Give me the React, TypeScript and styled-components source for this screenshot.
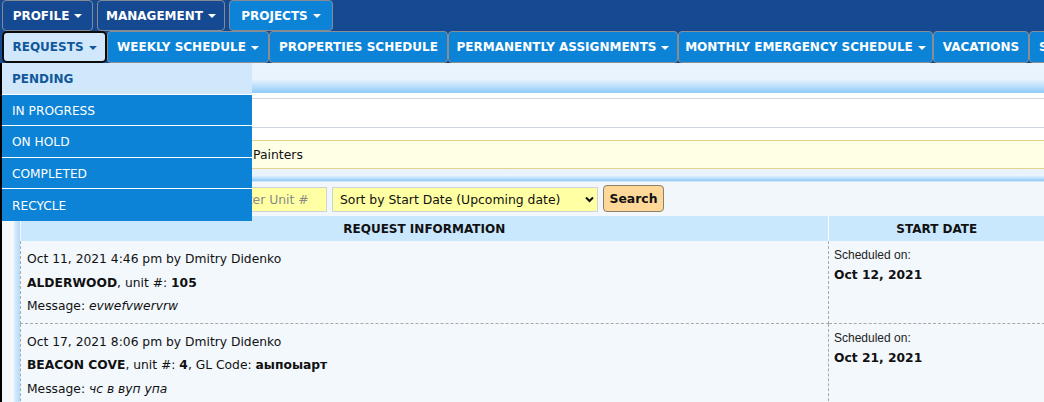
import React from "react";
import styled, { createGlobalStyle, css } from "styled-components";

const GlobalStyle = createGlobalStyle`
  html, body { margin: 0; padding: 0; background: #f3f8fd; overflow: hidden; }
  body {
    font-family: "DejaVu Sans", Verdana, sans-serif;
    font-size: 12.3px;
    color: #111;
  }
  * { box-sizing: border-box; }
`;

const Page = styled.div`
  width: 1044px;
  min-height: 402px;
  overflow: hidden;
`;

const Header = styled.header`
  background: #154a92;
`;

const TopRow = styled.nav`
  display: flex;
  gap: 4px;
  padding-left: 2px;
  height: 31px;
`;

const TopTab = styled.div<{ $w: number; $bright?: boolean }>`
  width: ${(p) => p.$w}px;
  height: 31px;
  display: flex;
  align-items: center;
  justify-content: center;
  gap: 5px;
  border: 1px solid #858b94;
  border-radius: 4px;
  background: ${(p) => (p.$bright ? "#0c83d6" : "#154a92")};
  color: #fff;
  font-weight: bold;
  font-size: 12px;
  white-space: nowrap;
`;

const SubRow = styled.nav`
  display: flex;
  padding-left: 2px;
  height: 32px;
  white-space: nowrap;
`;

const SubTabWrap = styled.div`
  position: relative;
`;

const SubTab = styled.div<{ $w?: number; $active?: boolean }>`
  ${(p) => (p.$w ? css`width: ${p.$w}px;` : css`padding: 0 9px;`)}
  flex-shrink: 0;
  height: 32px;
  display: flex;
  align-items: center;
  justify-content: center;
  gap: 5px;
  border: 1px solid #8a8d92;
  border-radius: 4px;
  background: #0c83d6;
  color: #fff;
  font-weight: bold;
  font-size: 12px;
  ${(p) =>
    p.$active &&
    css`
      border: 2px solid #0b0b0b;
      border-radius: 5px;
      background: #d1e8fc;
      color: #11589b;
    `}
`;

const Caret = styled.span<{ $dark?: boolean }>`
  display: inline-block;
  width: 0;
  height: 0;
  border-left: 4px solid transparent;
  border-right: 4px solid transparent;
  border-top: 4px solid ${(p) => (p.$dark ? "#11589b" : "#fff")};
  margin-top: 1px;
`;

const Menu = styled.ul`
  position: absolute;
  top: 100%;
  left: 0;
  width: 250px;
  margin: 0;
  padding: 0;
  list-style: none;
  z-index: 10;
`;

const MenuItem = styled.li<{ $active?: boolean }>`
  height: 31.5px;
  display: flex;
  align-items: center;
  padding: 2px 0 0 10px;
  border-bottom: 1px solid #fff;
  background: ${(p) => (p.$active ? "#d1e8fc" : "#0c83d6")};
  color: ${(p) => (p.$active ? "#11589b" : "#fff")};
  font-weight: ${(p) => (p.$active ? "bold" : "normal")};
  font-size: ${(p) => (p.$active ? "12px" : "12.2px")};
  &:last-child { border-bottom: none; height: 31.5px; }
`;

const Content = styled.main`
  border-left: 2px solid #000;
`;

const GlowBand = styled.div<{ $h: number }>`
  height: ${(p) => p.$h}px;
  background: linear-gradient(to bottom, #eaf4fe 0%, #e8f3fe 55%, #8ecaf8 100%);
`;

const WhiteBox = styled.section`
  background: #fff;
  padding: 5px 0 12px;
`;

const TitleStrip = styled.div`
  height: 30px;
  border-top: 1px solid #cfd6de;
  border-bottom: 1px solid #cfd6de;
`;

const InfoBand = styled.div`
  height: 29px;
  display: flex;
  align-items: center;
  padding-left: 251px;
  background: #ffffe6;
  border-top: 1px solid #e6d28c;
  border-bottom: 1px solid #e6d28c;
  font-size: 12.4px;
`;

const FilterRow = styled.form`
  height: 35px;
  display: flex;
  align-items: center;
  gap: 5px;
  padding-left: 12px;
  background: #f2f7fc;
  border-top: 1px solid #d3e6f7;
`;

const fieldStyle = css`
  height: 25px;
  border: 1px solid #cdd3d8;
  background: #ffffa3;
  font-family: "DejaVu Sans", Verdana, sans-serif;
  font-size: 12.4px;
  color: #111;
  outline: none;
`;

const TextField = styled.input<{ $w: number }>`
  ${fieldStyle}
  width: ${(p) => p.$w}px;
  padding: 0 5px;
  &::placeholder { color: #8a8a8a; }
`;

const SelectWrap = styled.span`
  position: relative;
  display: inline-flex;
`;

const Select = styled.select<{ $w: number }>`
  ${fieldStyle}
  width: ${(p) => p.$w}px;
  appearance: none;
  padding: 0 18px 0 7px;
`;

const Chevron = styled.svg`
  position: absolute;
  right: 4px;
  top: 9px;
  pointer-events: none;
`;

const SearchButton = styled.button`
  height: 27px;
  width: 61px;
  margin-top: -1px;
  border: 1px solid #8d8067;
  border-radius: 4px;
  background: #fed898;
  font-family: "DejaVu Sans", Verdana, sans-serif;
  font-weight: bold;
  font-size: 12.4px;
  color: #111;
  padding: 0;
`;

const TableWrap = styled.div`
  padding-left: 18px;
  background: linear-gradient(to right, #f3f8fd 0, #f3f8fd 12px, #dcedfc 12px, #b5daf8 18px, #f3f8fd 18px);
`;

const Table = styled.table`
  width: 1024px;
  table-layout: fixed;
  border-collapse: collapse;
  background: #f3f8fd;
`;

const Th = styled.th<{ $w: number }>`
  width: ${(p) => p.$w}px;
  height: 25px;
  padding: 0;
  background: #c9e7fd;
  font-weight: bold;
  font-size: 12px;
  text-align: center;
  border-right: 1px solid #fff;
  &:last-child { border-right: none; }
`;

const Td = styled.td`
  vertical-align: top;
  border-left: 1px dashed #a9a9a9;
  border-right: 1px dashed #a9a9a9;
  border-bottom: 1px dashed #a9a9a9;
`;

const InfoCell = styled(Td)`
  padding: 7px 6px 3px 6px;
  height: 82px;
`;

const Line = styled.div`
  line-height: 23.5px;
  white-space: nowrap;
`;

const DateCell = styled(Td)`
  padding: 5px 5px;
`;

const DateLabel = styled.div`
  font-family: "Liberation Sans", Arial, sans-serif;
  font-size: 12px;
  line-height: 19px;
  color: #222;
`;

const DateValue = styled.div`
  font-weight: bold;
  line-height: 20px;
`;

type Req = {
  created: string;
  property: string;
  unit: string;
  gl?: string;
  message: string;
  start: string;
};

const requests: Req[] = [
  {
    created: "Oct 11, 2021 4:46 pm by Dmitry Didenko",
    property: "ALDERWOOD",
    unit: "105",
    message: "evwefvwervrw",
    start: "Oct 12, 2021",
  },
  {
    created: "Oct 17, 2021 8:06 pm by Dmitry Didenko",
    property: "BEACON COVE",
    unit: "4",
    gl: "аыпоыарт",
    message: "чс в вуп упа",
    start: "Oct 21, 2021",
  },
];

const subTabs: { label: string; w?: number; caret?: boolean }[] = [
  { label: "WEEKLY SCHEDULE", w: 162, caret: true },
  { label: "PROPERTIES SCHEDULE", w: 179 },
  { label: "PERMANENTLY ASSIGNMENTS", w: 230, caret: true },
  { label: "MONTHLY EMERGENCY SCHEDULE", w: 255, caret: true },
  { label: "VACATIONS", w: 96 },
  { label: "SETTINGS" },
];

const menuItems = ["PENDING", "IN PROGRESS", "ON HOLD", "COMPLETED", "RECYCLE"];

export default function App() {
  return (
    <Page>
      <GlobalStyle />
      <Header>
        <TopRow>
          <TopTab $w={91}>PROFILE <Caret /></TopTab>
          <TopTab $w={128}>MANAGEMENT <Caret /></TopTab>
          <TopTab $w={104} $bright>PROJECTS <Caret /></TopTab>
        </TopRow>
        <SubRow>
          <SubTabWrap>
            <SubTab $w={105} $active>
              REQUESTS <Caret $dark />
            </SubTab>
            <Menu>
              {menuItems.map((m, i) => (
                <MenuItem key={m} $active={i === 0}>{m}</MenuItem>
              ))}
            </Menu>
          </SubTabWrap>
          {subTabs.map((t) => (
            <SubTab key={t.label} $w={t.w}>
              {t.label}
              {t.caret && <Caret />}
            </SubTab>
          ))}
        </SubRow>
      </Header>
      <Content>
        <GlowBand $h={30} />
        <WhiteBox>
          <TitleStrip />
        </WhiteBox>
        <InfoBand>Painters</InfoBand>
        <GlowBand $h={12} />
        <FilterRow onSubmit={(e) => e.preventDefault()}>
          <SelectWrap>
            <Select $w={207} defaultValue="all">
              <option value="all">All Properties</option>
            </Select>
          </SelectWrap>
          <TextField $w={101} placeholder="Enter Unit #" />
          <SelectWrap>
            <Select $w={266} defaultValue="start">
              <option value="start">Sort by Start Date (Upcoming date)</option>
            </Select>
            <Chevron width="9" height="7" viewBox="0 0 9 7">
              <path d="M1 1.5 L4.5 5 L8 1.5" fill="none" stroke="#111" strokeWidth="2" />
            </Chevron>
          </SelectWrap>
          <SearchButton type="submit">Search</SearchButton>
        </FilterRow>
        <TableWrap>
          <Table>
            <thead>
              <tr>
                <Th $w={808}>REQUEST INFORMATION</Th>
                <Th $w={216}>START DATE</Th>
              </tr>
            </thead>
            <tbody>
              {requests.map((r) => (
                <tr key={r.created}>
                  <InfoCell>
                    <Line>{r.created}</Line>
                    <Line>
                      <b>{r.property}</b>, unit #: <b>{r.unit}</b>
                      {r.gl && (
                        <>
                          , GL Code: <b>{r.gl}</b>
                        </>
                      )}
                    </Line>
                    <Line>
                      Message: <i>{r.message}</i>
                    </Line>
                  </InfoCell>
                  <DateCell>
                    <DateLabel>Scheduled on:</DateLabel>
                    <DateValue>{r.start}</DateValue>
                  </DateCell>
                </tr>
              ))}
            </tbody>
          </Table>
        </TableWrap>
      </Content>
    </Page>
  );
}
